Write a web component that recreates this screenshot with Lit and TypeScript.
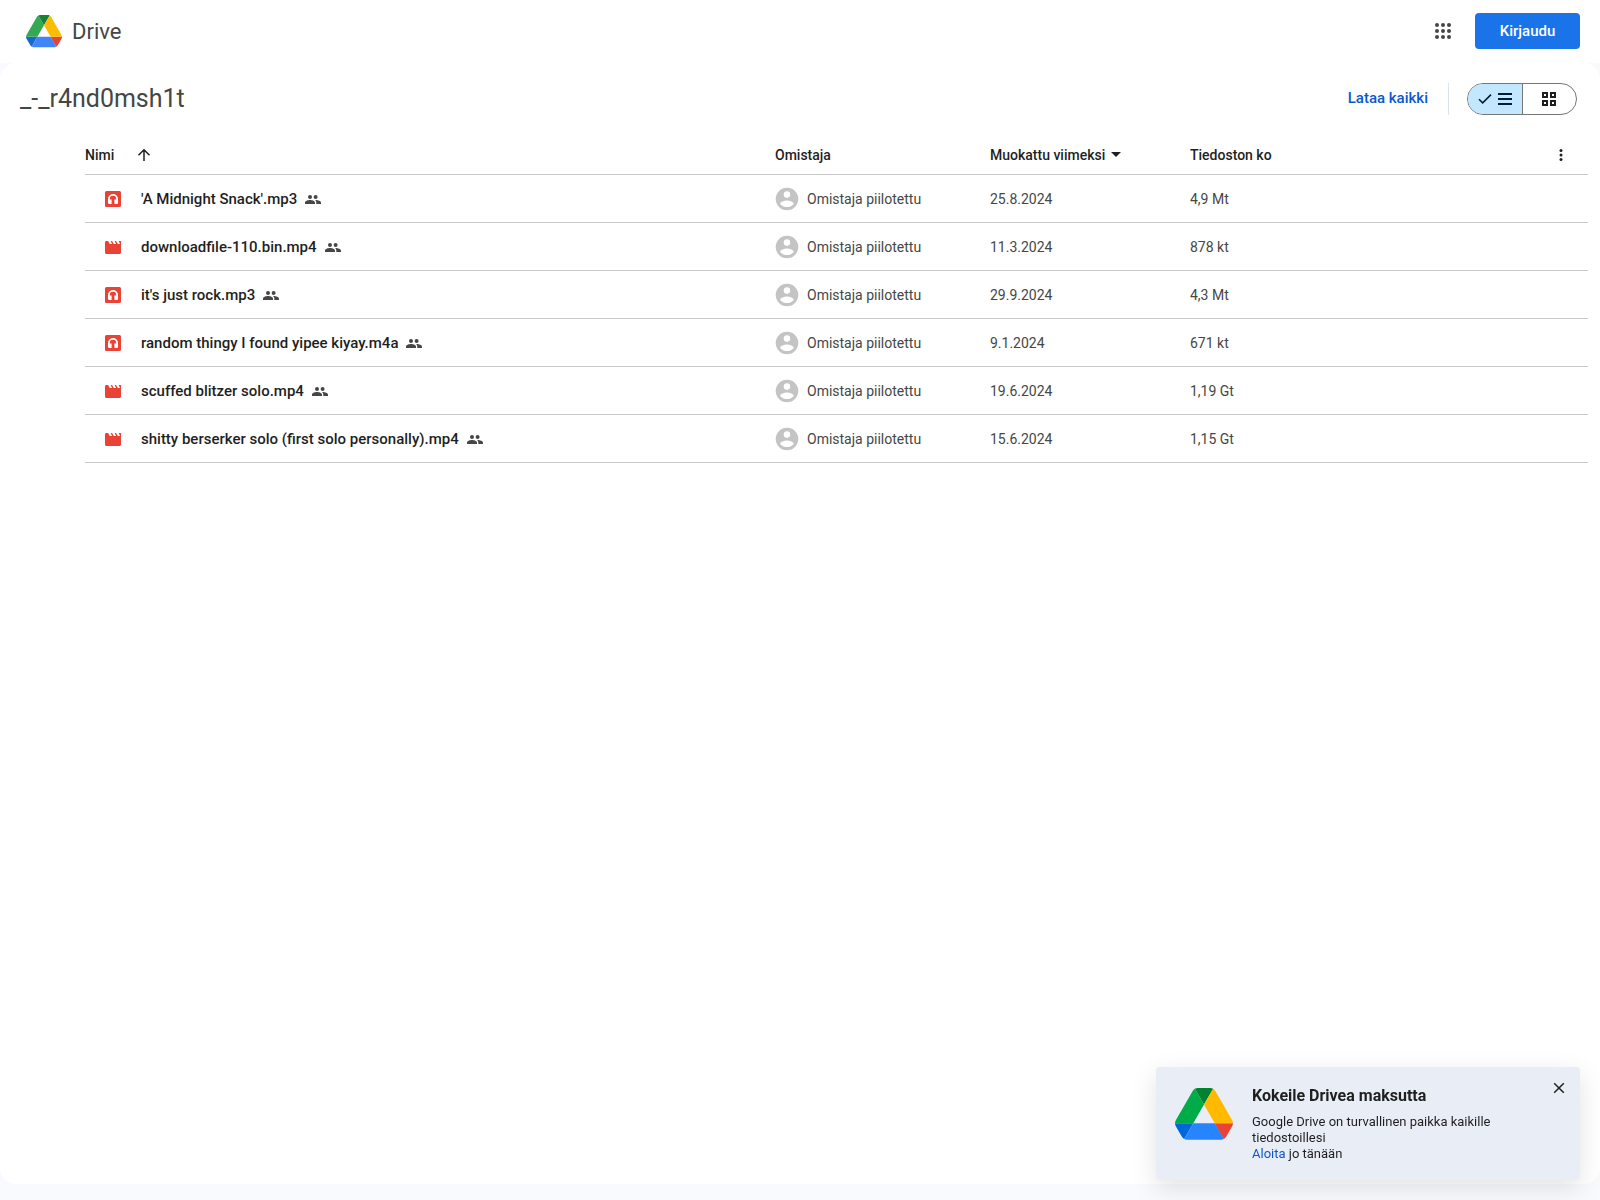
import { LitElement, html, css, svg } from "lit";
import { customElement, property } from "lit/decorators.js";

type Kind = "audio" | "video";
interface FileRow {
  name: string;
  kind: Kind;
  modified: string;
  size: string;
}

const FILES: FileRow[] = [
  { name: "'A Midnight Snack'.mp3", kind: "audio", modified: "25.8.2024", size: "4,9 Mt" },
  { name: "downloadfile-110.bin.mp4", kind: "video", modified: "11.3.2024", size: "878 kt" },
  { name: "it's just rock.mp3", kind: "audio", modified: "29.9.2024", size: "4,3 Mt" },
  { name: "random thingy I found yipee kiyay.m4a", kind: "audio", modified: "9.1.2024", size: "671 kt" },
  { name: "scuffed blitzer solo.mp4", kind: "video", modified: "19.6.2024", size: "1,19 Gt" },
  { name: "shitty berserker solo (first solo personally).mp4", kind: "video", modified: "15.6.2024", size: "1,15 Gt" },
];

const LOGO_SOFT = ["#1967d2", "#34a853", "#ea4335", "#188038", "#4285f4", "#fbbc04"];
const LOGO_VIVID = ["#0066da", "#00ac47", "#ea4335", "#00832d", "#2684fc", "#ffba00"];

const LOGO_PATHS = [
  "m6.6 66.85 3.85 6.65c.8 1.4 1.95 2.5 3.3 3.3l13.75-23.8h-27.5c0 1.55.4 3.1 1.2 4.5z",
  "m43.65 25-13.75-23.8c-1.35.8-2.5 1.9-3.3 3.3l-25.4 44a9.06 9.06 0 0 0 -1.2 4.5h27.5z",
  "m73.55 76.8c1.35-.8 2.5-1.9 3.3-3.3l1.6-2.75 7.65-13.25c.8-1.4 1.2-2.95 1.2-4.5h-27.502l5.852 11.5z",
  "m43.65 25 13.75-23.8c-1.35-.8-2.9-1.2-4.5-1.2h-18.5c-1.6 0-3.15.45-4.5 1.2z",
  "m59.8 53h-32.3l-13.75 23.8c1.35.8 2.9 1.2 4.5 1.2h50.8c1.6 0 3.15-.45 4.5-1.2z",
  "m73.4 26.5-12.7-22c-.8-1.4-1.95-2.5-3.3-3.3l-13.75 23.8 16.15 28h27.45c0-1.55-.4-3.1-1.2-4.5z",
];

@customElement("drive-logo")
export class DriveLogo extends LitElement {
  @property({ type: Boolean }) vivid = false;

  static styles = css`
    :host { display: block; }
    .mark { display: block; width: 100%; }
  `;

  render() {
    const colors = this.vivid ? LOGO_VIVID : LOGO_SOFT;
    return html`<svg class="mark" viewBox="0 0 87.3 78" aria-hidden="true">
      ${LOGO_PATHS.map((d, i) => svg`<path d=${d} fill=${colors[i]}></path>`)}
    </svg>`;
  }
}

const audioIcon = html`<svg class="file-icon" viewBox="0 0 16 16" aria-hidden="true">
  <rect width="16" height="16" rx="1.5" fill="#ea4335"></rect>
  <path d="M3.9 12V8a4.1 4.1 0 0 1 8.200 0v4" fill="none" stroke="#fff" stroke-width="1.8"></path>
  <path d="M3 8.600h3.600V13H4.200A1.200 1.200 0 0 1 3 11.800zM13 8.600H9.400V13h2.400a1.200 1.200 0 0 0 1.200-1.200z" fill="#fff"></path>
</svg>`;

const videoIcon = html`<svg class="file-icon" viewBox="0 0 16 16" aria-hidden="true">
  <path d="M16 2h-2.300l1.300 3h-2.200l-1.700-3H9.700L11 5H8.800L7.100 2H5.700L7 5H4.800L3.100 2H1.500C.7 2 0 2.700 0 3.500v10C0 14.300.7 15 1.500 15h13c.8 0 1.500-.7 1.500-1.500z" fill="#ea4335"></path>
</svg>`;

const peopleIcon = html`<svg class="people" viewBox="0 0 16 16" role="img" aria-label="Jaettu">
  <circle cx="5" cy="6" r="2" fill="#444746"></circle>
  <circle cx="10.600" cy="6" r="2" fill="#444746"></circle>
  <path d="M0 13v-1.300C0 9.800 3 9 5 9s5 .8 5 2.700V13zM11.300 13v-1.300c0-1.100-.5-2-1.300-2.600 2.400-.2 6 .7 6 2.600V13z" fill="#444746"></path>
</svg>`;

const avatarIcon = html`<svg class="avatar" viewBox="0 0 24 24" aria-hidden="true">
  <path fill="#c4c4c4" fill-rule="evenodd" d="M12 .7a11.300 11.300 0 1 0 0 22.600 11.300 11.300 0 0 0 0-22.600zm0 3.600a3.300 3.300 0 1 1 0 6.600 3.300 3.300 0 0 1 0-6.600zm0 15.800c-2.700 0-5.200-1-6.800-3.100.1-2.200 4.500-3.400 6.800-3.400s6.700 1.200 6.800 3.400c-1.600 2.100-4.100 3.100-6.800 3.100z"></path>
</svg>`;

@customElement("app-root")
export class AppRoot extends LitElement {
  static styles = css`
    :host {
      display: flex;
      flex-direction: column;
      min-height: 100vh;
      box-sizing: border-box;
      padding-bottom: 16px;
      background: #f8fafd;
      color: #1f1f1f;
      font-family: Roboto, "Liberation Sans", sans-serif;
      font-size: 14px;
      line-height: 20px;
    }
    button {
      font: inherit;
      color: inherit;
      border: 0;
      padding: 0;
      background: none;
      cursor: pointer;
    }
    svg { display: block; flex: none; }
    .header {
      display: flex;
      align-items: center;
      height: 63px;
      box-sizing: border-box;
      padding: 0 20px 0 26px;
      background: #fff;
    }
    .brand {
      display: flex;
      align-items: center;
      gap: 10px;
      margin-right: auto;
      color: #444746;
      font-size: 22px;
      line-height: 28px;
      text-decoration: none;
    }
    .brand-logo { width: 36px; }
    .actions { display: flex; align-items: center; gap: 20px; padding-bottom: 2px; }
    .apps { padding: 4px; }
    .sign-in {
      min-width: 105px;
      height: 36px;
      border-radius: 4px;
      background: #1a73e8;
      color: #fff;
      font-weight: 500;
      font-size: 15px;
    }
    .panel {
      flex: 1;
      background: #fff;
      border-radius: 16px;
    }
    .toolbar {
      display: flex;
      align-items: center;
      height: 72px;
      padding: 0 23px 0 20px;
    }
    .title {
      margin: 0 auto 0 0;
      color: #444746;
      font-size: 25px;
      line-height: 32px;
      font-weight: 400;
    }
    .download {
      padding-bottom: 2px;
      color: #0b57d0;
      font-weight: 500;
      font-size: 15px;
    }
    .divider { width: 1px; height: 32px; margin: 0 18px 0 20px; background: #dde3ea; }
    .toggle {
      display: flex;
      width: 110px;
      height: 32px;
      box-sizing: border-box;
      border: 1px solid #747775;
      border-radius: 16px;
      overflow: hidden;
    }
    .view { flex: 1; display: flex; align-items: center; justify-content: center; gap: 6px; }
    .view.on { background: #c2e7ff; border-right: 1px solid #747775; }
    .list { padding: 0 12px 0 85px; }
    .files { width: 100%; table-layout: fixed; border-collapse: separate; border-spacing: 0; }
    .c-owner { width: 215px; }
    .c-date { width: 200px; }
    .c-size { width: 82px; }
    .c-more { width: 316px; }
    th, td {
      box-sizing: border-box;
      padding: 0;
      text-align: left;
      border-bottom: 1px solid #c7c7c7;
      white-space: nowrap;
      overflow: hidden;
      font-weight: 400;
    }
    th { height: 40px; font-weight: 500; }
    td { height: 48px; color: #444746; }
    .cell { display: flex; align-items: center; }
    .name { padding-left: 20px; color: #1f1f1f; font-size: 15px; font-weight: 500; }
    .file-icon { width: 16px; height: 16px; margin-right: 20px; }
    .people { width: 16px; height: 16px; margin-left: 8px; }
    .avatar { width: 24px; height: 24px; margin-right: 8px; }
    .sort { gap: 23px; }
    .date-menu { gap: 6px; }
    .more { margin-left: auto; margin-right: 19px; }
    .toast {
      position: fixed;
      right: 20px;
      bottom: 20px;
      display: flex;
      width: 424px;
      box-sizing: border-box;
      padding: 19px 15px 18px 19px;
      border-radius: 4px;
      background: #e9eef6;
      box-shadow: 0 8px 24px rgba(60, 64, 67, 0.15);
      color: #1f1f1f;
      font-size: 13px;
      line-height: 16px;
    }
    .toast-logo { width: 58px; margin: 2px 19px 0 0; }
    .toast-body { flex: 1; }
    .toast-title { margin: 0 0 8px; font-size: 16px; line-height: 20px; font-weight: 700; }
    .toast-text { margin: 0; max-width: 280px; }
    .link { color: #0b57d0; text-decoration: none; }
    .close { align-self: flex-start; margin-top: -4px; }
  `;

  private row(f: FileRow) {
    return html`<tr>
      <td><div class="cell name">${f.kind === "audio" ? audioIcon : videoIcon}<span>${f.name}</span>${peopleIcon}</div></td>
      <td><div class="cell">${avatarIcon}<span>Omistaja piilotettu</span></div></td>
      <td>${f.modified}</td>
      <td>${f.size}</td>
      <td></td>
    </tr>`;
  }

  render() {
    return html`
      <header class="header">
        <a class="brand" href="#"><drive-logo class="brand-logo"></drive-logo><span>Drive</span></a>
        <div class="actions">
          <button class="apps" aria-label="Google-sovellukset">
            <svg width="16" height="16" viewBox="0 0 16 16" fill="#444746">
              ${[2, 8, 14].map((y) => [2, 8, 14].map((x) => svg`<circle cx=${x} cy=${y} r="2"></circle>`))}
            </svg>
          </button>
          <button class="sign-in">Kirjaudu</button>
        </div>
      </header>
      <main class="panel">
        <div class="toolbar">
          <h1 class="title">_-_r4nd0msh1t</h1>
          <button class="download">Lataa kaikki</button>
          <span class="divider"></span>
          <div class="toggle" role="group" aria-label="Näkymä">
            <button class="view on" aria-label="Luettelo" aria-pressed="true">
              <svg width="14" height="12" viewBox="0 0 14 12"><path d="M1 6.2l3.700 3.700L13 1.600" fill="none" stroke="#001d35" stroke-width="1.5"></path></svg>
              <svg width="14" height="12" viewBox="0 0 14 12"><path d="M0 0h14v2H0zM0 5h14v2H0zM0 10h14v2H0z" fill="#001d35"></path></svg>
            </button>
            <button class="view" aria-label="Ruudukko" aria-pressed="false">
              <svg width="14" height="14" viewBox="0 0 14 14" fill="none" stroke="#1f1f1f" stroke-width="2">
                <path d="M1 1h4v4H1zM9 1h4v4H9zM1 9h4v4H1zM9 9h4v4H9z"></path>
              </svg>
            </button>
          </div>
        </div>
        <div class="list">
          <table class="files">
            <colgroup><col /><col class="c-owner" /><col class="c-date" /><col class="c-size" /><col class="c-more" /></colgroup>
            <thead>
              <tr>
                <th><button class="cell sort">Nimi
                  <svg width="14" height="14" viewBox="0 0 14 14"><path d="M7 13V2M1.5 7.200L7 1.700l5.500 5.500" fill="none" stroke="#1f1f1f" stroke-width="1.5"></path></svg>
                </button></th>
                <th>Omistaja</th>
                <th><button class="cell date-menu">Muokattu viimeksi
                  <svg width="10" height="5" viewBox="0 0 10 5"><path d="M0 0h10L5 5z" fill="#1f1f1f"></path></svg>
                </button></th>
                <th>Tiedoston koko</th>
                <th><div class="cell"><button class="more" aria-label="Lisää">
                  <svg width="16" height="16" viewBox="0 0 16 16" fill="#1f1f1f"><circle cx="8" cy="3.5" r="1.5"></circle><circle cx="8" cy="8" r="1.5"></circle><circle cx="8" cy="12.5" r="1.5"></circle></svg>
                </button></div></th>
              </tr>
            </thead>
            <tbody>${FILES.map((f) => this.row(f))}</tbody>
          </table>
        </div>
      </main>
      <aside class="toast">
        <drive-logo class="toast-logo" vivid></drive-logo>
        <div class="toast-body">
          <h2 class="toast-title">Kokeile Drivea maksutta</h2>
          <p class="toast-text">Google Drive on turvallinen paikka kaikille tiedostoillesi<br /><a class="link" href="#">Aloita</a> jo tänään</p>
        </div>
        <button class="close" aria-label="Sulje">
          <svg width="12" height="12" viewBox="0 0 12 12"><path d="M1.2 1.2l9.600 9.600M10.800 1.200L1.200 10.800" stroke="#1f1f1f" stroke-width="1.5"></path></svg>
        </button>
      </aside>
    `;
  }
}
